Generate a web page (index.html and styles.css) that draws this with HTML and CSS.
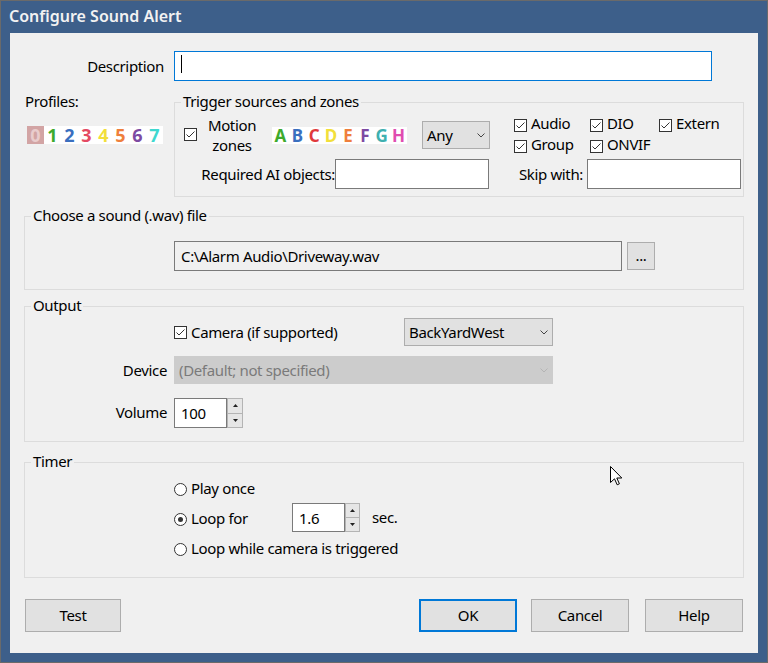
FILE: index.html
```html
<!DOCTYPE html>
<html>
<head>
<meta charset="utf-8">
<title>Configure Sound Alert</title>
<link rel="stylesheet" href="styles.css">
</head>
<body>
<div class="window">
  <div class="titlebar">Configure Sound Alert</div>
  <div class="client">
    <div class="row desc-row">
      <span class="lbl desc-lbl">Description</span>
      <div class="field focused desc-field"><span class="caret"></span></div>
    </div>

    <div class="top">
      <div class="profiles">
        <div class="profiles-lbl">Profiles:</div>
        <div class="strip profiles-strip">
          <span class="p0">0</span><span class="c-green">1</span><span class="c-blue">2</span><span class="c-red">3</span><span class="c-yellow">4</span><span class="c-orange">5</span><span class="c-purple">6</span><span class="c-cyan">7</span>
        </div>
      </div>
      <fieldset class="group trigger">
        <legend>Trigger sources and zones</legend>
        <div class="trow-a">
          <span class="cb motion-cb"><svg viewBox="0 0 11 11" width="11" height="11"><path d="M1.5 5.5 L4 8 L9.5 2.5" fill="none" stroke="#333" stroke-width="1"/></svg></span>
          <span class="mz">Motion<br>zones</span>
          <div class="strip zones-strip">
            <span class="c-green">A</span><span class="c-blue">B</span><span class="c-red">C</span><span class="c-yellow">D</span><span class="c-orange">E</span><span class="c-purple">F</span><span class="c-teal">G</span><span class="c-magenta">H</span>
          </div>
          <div class="combo any-combo"><span>Any</span><svg class="chev" viewBox="0 0 8 5" width="8" height="5"><path d="M0.5 0.5 L4 4 L7.5 0.5" fill="none" stroke="#444" stroke-width="1"/></svg></div>
          <div class="cbgrid">
            <div class="cbl"><span class="cb"><svg viewBox="0 0 11 11" width="11" height="11"><path d="M1.5 5.5 L4 8 L9.5 2.5" fill="none" stroke="#333" stroke-width="1"/></svg></span>Audio</div>
            <div class="cbl"><span class="cb"><svg viewBox="0 0 11 11" width="11" height="11"><path d="M1.5 5.5 L4 8 L9.5 2.5" fill="none" stroke="#333" stroke-width="1"/></svg></span>DIO</div>
            <div class="cbl"><span class="cb"><svg viewBox="0 0 11 11" width="11" height="11"><path d="M1.5 5.5 L4 8 L9.5 2.5" fill="none" stroke="#333" stroke-width="1"/></svg></span>Extern</div>
            <div class="cbl"><span class="cb"><svg viewBox="0 0 11 11" width="11" height="11"><path d="M1.5 5.5 L4 8 L9.5 2.5" fill="none" stroke="#333" stroke-width="1"/></svg></span>Group</div>
            <div class="cbl"><span class="cb"><svg viewBox="0 0 11 11" width="11" height="11"><path d="M1.5 5.5 L4 8 L9.5 2.5" fill="none" stroke="#333" stroke-width="1"/></svg></span>ONVIF</div>
          </div>
        </div>
        <div class="row trow-b">
          <span class="lbl ai-lbl">Required AI objects:</span>
          <div class="field ai-field"></div>
          <span class="lbl skip-lbl">Skip with:</span>
          <div class="field skip-field"></div>
        </div>
      </fieldset>
    </div>

    <fieldset class="group file-group">
      <legend>Choose a sound (.wav) file</legend>
      <div class="row file-row">
        <div class="field readonly path-field">C:\Alarm Audio\Driveway.wav</div>
        <div class="btn dots-btn">...</div>
      </div>
    </fieldset>

    <fieldset class="group output-group">
      <legend>Output</legend>
      <div class="row out-row1">
        <div class="cbl camera-cbl"><span class="cb"><svg viewBox="0 0 11 11" width="11" height="11"><path d="M1.5 5.5 L4 8 L9.5 2.5" fill="none" stroke="#333" stroke-width="1"/></svg></span>Camera (if supported)</div>
        <div class="combo cam-combo"><span>BackYardWest</span><svg class="chev" viewBox="0 0 8 5" width="8" height="5"><path d="M0.5 0.5 L4 4 L7.5 0.5" fill="none" stroke="#444" stroke-width="1"/></svg></div>
      </div>
      <div class="row out-row2">
        <span class="lbl out-lbl">Device</span>
        <div class="combo disabled dev-combo"><span>(Default; not specified)</span><svg class="chev" viewBox="0 0 8 5" width="8" height="5"><path d="M0.5 0.5 L4 4 L7.5 0.5" fill="none" stroke="#b4b4b4" stroke-width="1"/></svg></div>
      </div>
      <div class="row out-row3">
        <span class="lbl out-lbl">Volume</span>
        <div class="spinbox">
          <div class="field spin-field">100</div>
          <div class="spin">
            <div class="spin-btn"><svg viewBox="0 0 5 3" width="5" height="3"><path d="M0 3 L2.5 0 L5 3 Z" fill="#222"/></svg></div>
            <div class="spin-btn"><svg viewBox="0 0 5 3" width="5" height="3"><path d="M0 0 L2.5 3 L5 0 Z" fill="#222"/></svg></div>
          </div>
        </div>
      </div>
    </fieldset>

    <fieldset class="group timer-group">
      <legend>Timer</legend>
      <div class="row radio-row first">
        <span class="radio"></span><span class="rtext">Play once</span>
      </div>
      <div class="row radio-row">
        <span class="radio checked"></span><span class="rtext loop-lbl">Loop for</span>
        <div class="spinbox timer-spin">
          <div class="field spin-field">1.6</div>
          <div class="spin">
            <div class="spin-btn"><svg viewBox="0 0 5 3" width="5" height="3"><path d="M0 3 L2.5 0 L5 3 Z" fill="#222"/></svg></div>
            <div class="spin-btn"><svg viewBox="0 0 5 3" width="5" height="3"><path d="M0 0 L2.5 3 L5 0 Z" fill="#222"/></svg></div>
          </div>
        </div>
        <span class="sec">sec.</span>
      </div>
      <div class="row radio-row">
        <span class="radio"></span><span class="rtext">Loop while camera is triggered</span>
      </div>
    </fieldset>

    <div class="row buttons">
      <div class="btn test-btn">Test</div>
      <div class="btn default ok-btn">OK</div>
      <div class="btn cancel-btn">Cancel</div>
      <div class="btn help-btn">Help</div>
    </div>
  </div>
  <svg class="cursor" viewBox="0 0 13 20" width="13" height="20"><path d="M0.5 0.5 L0.5 16.5 L4.5 12.8 L7.2 18.8 L9.4 17.8 L6.8 12 L11.8 12 Z" fill="#fff" stroke="#000" stroke-width="1" stroke-linejoin="miter"/></svg>
</div>
</body>
</html>
```

FILE: styles.css
```css
* { box-sizing: border-box; }
html, body { margin: 0; padding: 0; }
body {
  width: 768px;
  height: 663px;
  overflow: hidden;
  background: #3d5f8a;
  font-family: "Noto Sans", "Open Sans", sans-serif;
  font-size: 15px;
  line-height: 20px;
  letter-spacing: -0.35px;
  color: #000;
}
.window {
  position: relative;
  width: 768px;
  height: 663px;
  background: #3d5f8a;
  border: 1px solid #6a6a6a;
}
.titlebar {
  height: 32px;
  line-height: 31px;
  padding-left: 8px;
  color: #f2f2f2;
  font-size: 16px;
  font-weight: 600;
  letter-spacing: 0;
  white-space: nowrap;
}
.client {
  margin: 0 9px;
  height: 620px;
  background: #f0f0f0;
  padding-top: 18px;
}
.row { display: flex; align-items: center; }
.lbl { text-align: right; white-space: nowrap; }

/* description */
.desc-row { height: 30px; }
.desc-lbl { width: 154px; margin-right: 10px; }
.field {
  height: 30px;
  background: #fff;
  border: 1px solid #7a7a7a;
  padding-left: 6px;
  display: flex;
  align-items: center;
  white-space: nowrap;
}
.field.focused { border-color: #0078d7; }
.field.readonly { background: #f0f0f0; }
.desc-field { width: 538px; }
.caret { width: 1px; height: 18px; background: #000; margin-bottom: 4px; }

/* top section */
.top { display: flex; align-items: flex-start; margin-top: 11px; }
.profiles { width: 164px; padding-left: 15px; }
.profiles-lbl { white-space: nowrap; margin-top: -1px; }
.strip { display: flex; background: #fff; font-weight: 700; letter-spacing: 0; }
.strip span { width: 17px; text-align: center; }
.profiles-strip {
  margin-top: 15px;
  margin-left: 2px;
  width: 136px;
  height: 18px;
  font-size: 18px;
  line-height: 18px;
}
.profiles-strip .p0 { background: #d2a4a4; color: #e9cccc; }
.zones-strip {
  margin-left: 15px;
  margin-top: 15px;
  width: 135px;
  height: 17px;
  font-size: 17px;
  line-height: 17px;
}
.c-green { color: #3eaa2c; }
.c-blue { color: #3a6fbf; }
.c-red { color: #e0383c; }
.c-yellow { color: #f2df3a; }
.c-orange { color: #ef7f3c; }
.c-purple { color: #7d4aa2; }
.c-cyan { color: #3fd8cf; }
.c-teal { color: #3fb0b0; }
.c-magenta { color: #e04cb0; }
.profiles-strip .c-red { color: #e44a62; }

/* group boxes */
.group {
  margin: 0;
  padding: 0;
  border: 1px solid #dcdcdc;
  min-width: 0;
}
.group legend {
  margin-left: 6px;
  padding: 0 2px 2px;
  line-height: 18px;
  white-space: nowrap;
}
.trigger { width: 570px; padding-bottom: 7px; }

.trow-a { display: flex; align-items: flex-start; height: 44px; }
.cb {
  display: inline-flex;
  flex: none;
  width: 13px;
  height: 13px;
  border: 1px solid #333;
  background: #fff;
}
.cb svg { display: block; }
.motion-cb { margin-left: 9px; margin-top: 16px; }
.mz {
  width: 50px;
  margin-left: 10px;
  margin-top: 3px;
  text-align: center;
  white-space: nowrap;
}
.combo {
  display: flex;
  align-items: center;
  height: 28px;
  background: #e1e1e1;
  border: 1px solid #adadad;
  padding-left: 4px;
  white-space: nowrap;
}
.combo .chev { margin-left: auto; margin-right: 4px; flex: none; }
.combo.disabled { background: #cccccc; border-color: #cccccc; color: #7a7a7a; }
.any-combo { width: 68px; margin-left: 15px; margin-top: 9px; }
.cbgrid {
  display: grid;
  grid-template-columns: 76px 69px auto;
  grid-auto-rows: 21px;
  margin-left: 24px;
  margin-top: 1px;
}
.cbl { display: flex; align-items: flex-start; white-space: nowrap; }
.cbl .cb { margin-top: 6px; margin-right: 4px; }

.trow-b { margin-top: 3px; height: 30px; }
.ai-lbl { width: 160px; }
.ai-field { width: 154px; }
.skip-lbl { width: 94px; margin-right: 4px; }
.skip-field { width: 154px; }

/* file */
.file-group { margin: 9px 0 0 14px; width: 720px; padding-bottom: 18px; }
.file-row { margin-top: 15px; }
.path-field { width: 448px; margin-left: 149px; }
.btn {
  display: flex;
  align-items: center;
  justify-content: center;
  background: #e1e1e1;
  border: 1px solid #adadad;
  white-space: nowrap;
}
.dots-btn { width: 28px; height: 28px; margin-left: 5px; line-height: 14px; padding-bottom: 2px; }

/* output */
.output-group { margin: 6px 0 0 14px; width: 720px; padding-bottom: 13px; }
.out-row1 { margin-top: 2px; height: 28px; }
.camera-cbl { width: 230px; margin-left: 149px; }
.camera-cbl .cb { margin-top: 4px; }
.cam-combo { width: 149px; }
.out-row2 { margin-top: 10px; height: 28px; }
.out-lbl { width: 142px; margin-right: 7px; }
.dev-combo { width: 379px; }
.out-row3 { margin-top: 14px; height: 30px; }
.out-row3 .out-lbl { padding-bottom: 3px; }
.spinbox { display: flex; height: 30px; }
.spin-field { width: 53px; }
.spin { display: flex; flex-direction: column; width: 16px; height: 30px; }
.spin-btn {
  flex: 1;
  display: flex;
  align-items: center;
  justify-content: center;
  background: #e6e6e6;
  border: 1px solid #b4b4b4;
}
.spin-btn + .spin-btn { border-top: none; }
.spin-btn svg { display: block; }

/* timer */
.timer-group { margin: 10px 0 0 14px; width: 720px; padding-bottom: 13px; }
.radio-row { height: 30px; padding-left: 149px; white-space: nowrap; }
.radio-row.first { margin-top: 2px; }
.rtext { padding-bottom: 2px; }
.radio {
  position: relative;
  flex: none;
  width: 13px;
  height: 13px;
  border: 1px solid #333;
  border-radius: 50%;
  background: #fff;
  margin-right: 4px;
}
.radio.checked::after {
  content: "";
  position: absolute;
  left: 3px;
  top: 3px;
  width: 5px;
  height: 5px;
  border-radius: 50%;
  background: #333;
}
.loop-lbl { width: 101px; }
.timer-spin { height: 29px; margin-top: -3px; }
.timer-spin .spin-field { height: 29px; }
.timer-spin .spin { width: 15px; height: 29px; }
.sec { margin-left: 12px; margin-top: -5px; }

/* buttons */
.buttons { margin-top: 21px; height: 33px; align-items: stretch; }
.buttons .btn { width: 98px; padding-bottom: 1px; }
.buttons .test-btn { width: 96px; margin-left: 15px; }
.buttons .ok-btn { margin-left: 298px; border: 2px solid #0078d7; }
.buttons .cancel-btn { margin-left: 14px; }
.buttons .help-btn { margin-left: 16px; }

.cursor { position: absolute; left: 609px; top: 465px; }
```
